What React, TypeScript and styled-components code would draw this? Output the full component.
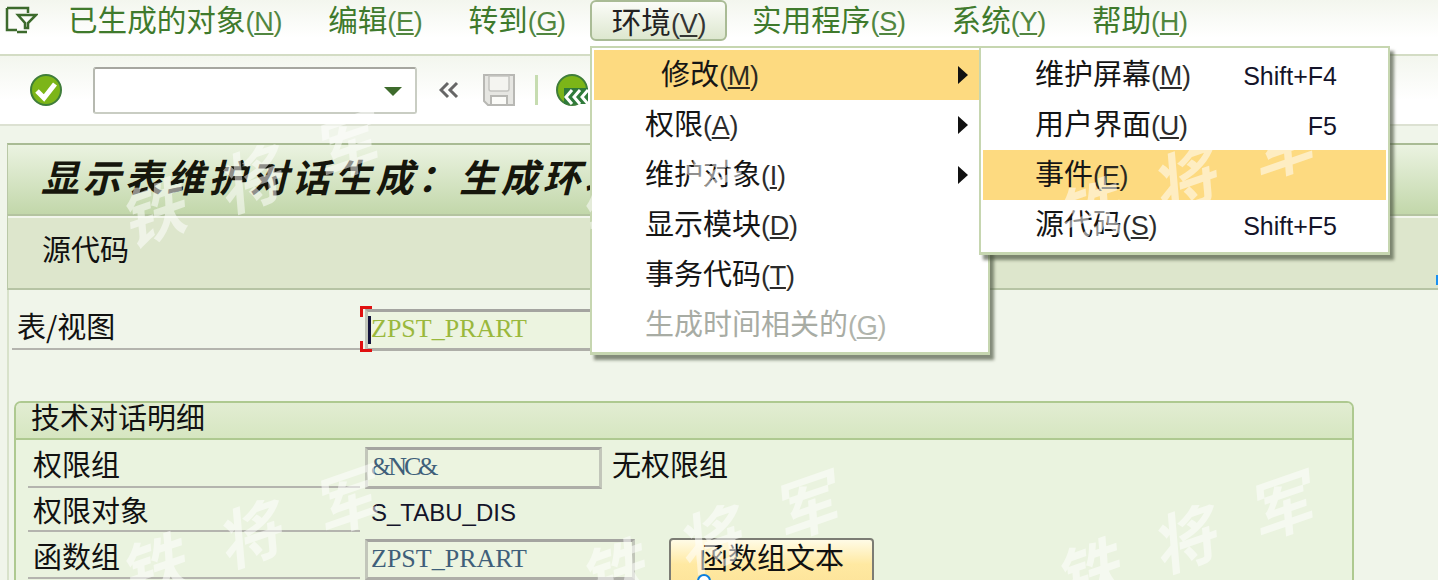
import styled, { createGlobalStyle } from 'styled-components';

const cjk = `"Noto Sans CJK SC", "Noto Sans", sans-serif`;

const GlobalStyle = createGlobalStyle`
  html, body {
    margin: 0;
    padding: 0;
    background: #f0f5ea;
    overflow: hidden;
  }
`;

const Page = styled.div`
  position: relative;
  width: 1438px;
  height: 580px;
  overflow: hidden;
  background: #f0f5ea;
  font-family: ${cjk};
  font-size: 29px;
  color: #111;
`;

const MenuBar = styled.div`
  display: flex;
  align-items: flex-start;
  height: 54px;
  padding-left: 5px;
  background: linear-gradient(#f3f6ee, #fff 70%);
  border-bottom: 2px solid #d3dcc4;
`;

const MenuTab = styled.div<{ $open?: boolean }>`
  display: flex;
  align-items: baseline;
  height: 41px;
  line-height: 38px;
  box-sizing: border-box;
  white-space: nowrap;
  padding: 0 23px;
  font-size: 29.6px;
  color: #3f7a2c;
  ${({ $open }) =>
    $open &&
    `
    margin: 0 2px 0 1px;
    padding: 0 19px 0 20px;
    color: #222;
    border: 2px solid #a9bb95;
    border-radius: 6px;
    background: linear-gradient(#fbfcf8, #dde7cf);
  `}
`;

const Key = styled.span`
  font-family: "Liberation Sans", sans-serif;
  font-size: 27px;
  letter-spacing: -0.3px;
  opacity: 0.9;
`;

const BarIcon = styled.svg`
  flex: none;
  width: 33px;
  height: 30px;
  margin: 5px 7px 0 0;
`;

const Toolbar = styled.div`
  display: flex;
  align-items: center;
  height: 68px;
  padding-left: 30px;
  background: linear-gradient(#f3f6ee, #fff 65%);
  border-bottom: 2px solid #dce1d2;
`;

const ToolIcon = styled.svg<{ $gapLeft?: number }>`
  flex: none;
  margin-left: ${({ $gapLeft }) => $gapLeft ?? 0}px;
`;

const CommandField = styled.div`
  position: relative;
  width: 324px;
  height: 47px;
  margin-left: 31px;
  box-sizing: border-box;
  background: #fff;
  border: 2px solid #c9cdc3;
  border-top-color: #a6a6a0;
  border-left-color: #b6b9b0;
  border-radius: 3px;
  &::after {
    content: '';
    position: absolute;
    right: 13px;
    top: 18px;
    border-left: 9px solid transparent;
    border-right: 9px solid transparent;
    border-top: 9px solid #3e6b2c;
  }
`;

const Separator = styled.div`
  width: 3px;
  height: 30px;
  margin-left: 20px;
  background: #c6dcb0;
`;

const Screen = styled.div`
  padding: 17px 0 0 7px;
`;

const TitleBar = styled.div`
  height: 69px;
  padding-left: 33px;
  border-top: 2px solid #a9bb94;
  border-left: 1px solid #b9c8a6;
  background: linear-gradient(#ebf3e1, #c2d7aa);
  font-size: 38px;
  font-weight: 700;
  font-style: italic;
  letter-spacing: 3.8px;
  line-height: 62px;
  white-space: nowrap;
  color: #16160c;
`;

const SubBar = styled.div`
  height: 72px;
  padding-left: 34px;
  border-top: 2px solid #b4c4a0;
  border-bottom: 2px solid #b6c4a4;
  border-left: 1px solid #b9c8a6;
  background: #dde6cc;
  box-shadow: inset 0 2px 0 #f2f6ec;
  line-height: 64px;
`;

const FormBody = styled.div`
  border-left: 2px solid #d8e2ca;
  padding-top: 16px;
`;

const Row = styled.div<{ $inset: number; $height: number }>`
  display: flex;
  align-items: flex-end;
  height: ${({ $height }) => $height}px;
  padding-left: ${({ $inset }) => $inset}px;
`;

const Label = styled.div<{ $width: number; $lift?: number }>`
  display: flex;
  align-items: flex-end;
  flex: none;
  width: ${({ $width }) => $width}px;
  height: 100%;
  box-sizing: border-box;
  padding: 0 0 ${({ $lift }) => $lift ?? 5}px 5px;
  margin-right: 5px;
  border-bottom: 2px solid #b4b4ae;
  line-height: 36px;
  white-space: nowrap;
`;

const Input = styled.div<{ $width: number; $height: number; $ink?: string; $tight?: boolean }>`
  position: relative;
  flex: none;
  width: ${({ $width }) => $width}px;
  height: ${({ $height }) => $height}px;
  margin-bottom: -1px;
  box-sizing: border-box;
  padding-left: 3px;
  border: 3px solid #c2c6ba;
  border-top-color: #a4a4a0;
  border-bottom-color: #aeaea8;
  font-family: "Liberation Serif", serif;
  font-size: 26px;
  letter-spacing: ${({ $tight }) => ($tight ? '-3px' : '0')};
  line-height: 34px;
  white-space: nowrap;
  color: ${({ $ink }) => $ink ?? '#3f5f7a'};
  background: #ecf4e0;
`;

const Corners = styled.div`
  position: absolute;
  left: -8px;
  top: -6px;
  width: 11px;
  height: 46px;
  border-left: 3px solid #e01010;
  &::before,
  &::after {
    content: '';
    position: absolute;
    left: 0;
    width: 9px;
    height: 3px;
    background: #e01010;
  }
  &::before { top: 0; }
  &::after { bottom: 0; }
  clip-path: polygon(0 0, 100% 0, 100% 11px, 0 11px, 0 35px, 100% 35px, 100% 100%, 0 100%);
`;

const Caret = styled.div`
  position: absolute;
  left: 0;
  top: 4px;
  width: 3px;
  height: 28px;
  background: #14143c;
`;

const Group = styled.div`
  width: 1340px;
  margin: 51px 0 0 5px;
  box-sizing: border-box;
  height: 200px;
  border: 2px solid #aec990;
  border-bottom: 0;
  border-radius: 7px 7px 0 0;
  background: #eaf3df;
`;

const GroupHead = styled.div`
  height: 35px;
  padding-left: 15px;
  border-bottom: 2px solid #aec990;
  background: linear-gradient(#e2edd2, #d6e6c1);
  line-height: 26px;
  border-radius: 5px 5px 0 0;
  margin-bottom: 5px;
`;

const Value = styled.div`
  margin: 0 0 0 10px;
  padding-bottom: 8px;
  align-self: center;
  line-height: 28px;
  white-space: nowrap;
`;

const PlainValue = styled.div`
  padding: 6px 0 0 6px;
  align-self: center;
  font-family: "Liberation Sans", sans-serif;
  font-size: 24px;
  color: #14142a;
`;

const Button = styled.div`
  position: relative;
  flex: none;
  width: 205px;
  height: 48px;
  margin: 0 0 -7px 34px;
  box-sizing: border-box;
  border: 2px solid #7c7c74;
  border-radius: 4px;
  background: linear-gradient(#fffbe6, #ffe9a2 55%, #fde49a);
  text-align: center;
  line-height: 32px;
  white-space: nowrap;
`;

const FocusDot = styled.div`
  position: absolute;
  left: 26px;
  top: 34px;
  width: 14px;
  height: 14px;
  box-sizing: border-box;
  border: 2px solid #0b7fe0;
  border-radius: 50%;
  background: #fff;
`;

const EdgeTick = styled.div`
  position: absolute;
  right: 0;
  top: 275px;
  width: 2px;
  height: 10px;
  background: #1a90f0;
`;

const Dropdown = styled.div<{ $left: number; $top: number; $width: number; $height: number }>`
  position: absolute;
  left: ${({ $left }) => $left}px;
  top: ${({ $top }) => $top}px;
  width: ${({ $width }) => $width}px;
  height: ${({ $height }) => $height}px;
  box-sizing: border-box;
  padding: 2px;
  background: #fff;
  border: 2px solid #c6d6b0;
  border-bottom-width: 3px;
  box-shadow: 4px 5px 3px rgba(72, 82, 62, 0.65);
`;

const DropRow = styled.div<{ $active?: boolean; $disabled?: boolean; $inset: number }>`
  display: flex;
  align-items: baseline;
  height: 50px;
  box-sizing: border-box;
  padding-left: ${({ $inset }) => $inset}px;
  line-height: 44px;
  white-space: nowrap;
  color: ${({ $disabled }) => ($disabled ? '#a8aca4' : '#151515')};
  background: ${({ $active }) => ($active ? '#fdda80' : 'transparent')};
`;

const Arrow = styled.span`
  align-self: center;
  margin-left: auto;
  margin-right: 18px;
  border-top: 9px solid transparent;
  border-bottom: 9px solid transparent;
  border-left: 10px solid #111;
`;

const Shortcut = styled.span`
  margin-left: auto;
  margin-right: 49px;
  font-family: "Liberation Sans", sans-serif;
  font-size: 25px;
  color: #14142a;
`;

const Watermarks = styled.div`
  position: absolute;
  inset: 0;
  pointer-events: none;
`;

const Mark = styled.span<{ $x: number; $y: number }>`
  position: absolute;
  left: ${({ $x }) => $x}px;
  top: ${({ $y }) => $y}px;
  font-size: 64px;
  font-weight: 700;
  font-style: italic;
  line-height: 64px;
  letter-spacing: 38px;
  white-space: nowrap;
  color: rgba(255, 255, 255, 0.52);
  transform: rotate(-19deg);
  transform-origin: 32px 32px;
`;

const tabs = [
  { text: '已生成的对象', key: 'N' },
  { text: '编辑', key: 'E' },
  { text: '转到', key: 'G' },
  { text: '环境', key: 'V', open: true },
  { text: '实用程序', key: 'S' },
  { text: '系统', key: 'Y' },
  { text: '帮助', key: 'H' },
];

const mainItems = [
  { text: '修改', key: 'M', active: true, more: true },
  { text: '权限', key: 'A', more: true },
  { text: '维护对象', key: 'I', more: true },
  { text: '显示模块', key: 'D' },
  { text: '事务代码', key: 'T' },
  { text: '生成时间相关的', key: 'G', disabled: true },
];

const subItems = [
  { text: '维护屏幕', key: 'M', shortcut: 'Shift+F4' },
  { text: '用户界面', key: 'U', shortcut: 'F5' },
  { text: '事件', key: 'E', active: true },
  { text: '源代码', key: 'S', shortcut: 'Shift+F5' },
];

const marks = [
  [118, 178],
  [578, 178],
  [1053, 178],
  [118, 533],
  [578, 538],
  [1053, 538],
];

function Mnemonic({ letter }: { letter: string }) {
  return (
    <Key>
      (<u>{letter}</u>)
    </Key>
  );
}

function OkIcon() {
  return (
    <ToolIcon width="32" height="32" viewBox="0 0 32 32">
      <circle cx="16" cy="16" r="15" fill="#7cb518" stroke="#3f7d3a" strokeWidth="2" />
      <path d="M7 17l7 7L25 10" fill="none" stroke="#fff" strokeWidth="5" />
    </ToolIcon>
  );
}

function BackChevrons() {
  return (
    <ToolIcon $gapLeft={22} width="20" height="18" viewBox="0 0 20 18">
      <path d="M9 2L2 9l7 7M18 2l-7 7 7 7" fill="none" stroke="#666" strokeWidth="3" />
    </ToolIcon>
  );
}

function SaveIcon() {
  return (
    <ToolIcon $gapLeft={24} width="32" height="32" viewBox="0 0 32 32">
      <path d="M1 1h30v30H5l-4-4z" fill="#e6e6e2" stroke="#b8b8b4" strokeWidth="2" />
      <path d="M6 2v13q0 2 2 2h16q2 0 2-2V2z" fill="#f4f4f0" stroke="#c4c4c0" strokeWidth="1.5" />
      <path d="M8 22h16v9H8z" fill="#fbfbf8" stroke="#b8b8b4" strokeWidth="2" />
    </ToolIcon>
  );
}

function EnterIcon() {
  return (
    <ToolIcon $gapLeft={18} width="32" height="32" viewBox="0 0 32 32">
      <circle cx="16" cy="16" r="15" fill="#7cb518" stroke="#3f7d3a" strokeWidth="2" />
      <path d="M8 14h24v16H8z" fill="#2f7a3a" />
      <path d="M16 16l-6 7 6 7M24 16l-6 7 6 7M32 16l-6 7 6 7" fill="none" stroke="#fff" strokeWidth="3" />
    </ToolIcon>
  );
}

export default function App() {
  return (
    <Page>
      <GlobalStyle />
      <MenuBar>
        <BarIcon viewBox="0 0 33 30">
          <path d="M2 3h21v5M2 3v22h10M22 27H12" fill="none" stroke="#3c6a2c" strokeWidth="2.5" />
          <path d="M13 10h18l-8 8v5h-3v-5z" fill="none" stroke="#3c6a2c" strokeWidth="2.5" />
        </BarIcon>
        {tabs.map((tab) => (
          <MenuTab key={tab.text} $open={tab.open}>
            {tab.text}
            <Mnemonic letter={tab.key} />
          </MenuTab>
        ))}
      </MenuBar>

      <Toolbar>
        <OkIcon />
        <CommandField />
        <BackChevrons />
        <SaveIcon />
        <Separator />
        <EnterIcon />
      </Toolbar>

      <Screen>
        <TitleBar>显示表维护对话生成：生成环境</TitleBar>
        <SubBar>源代码</SubBar>
        <FormBody>
          <Row $inset={3} $height={44}>
            <Label $width={348}>表/视图</Label>
            <Input $width={300} $height={42} $ink="#9ab83c">
              <Corners />
              <Caret />
              ZPST_PRART
            </Input>
          </Row>
          <Group>
            <GroupHead>技术对话明细</GroupHead>
            <Row $inset={12} $height={43}>
              <Label $width={332}>权限组</Label>
              <Input $width={237} $height={42} $tight>&amp;NC&amp;</Input>
              <Value>无权限组</Value>
            </Row>
            <Row $inset={12} $height={44}>
              <Label $width={332} $lift={3}>权限对象</Label>
              <PlainValue>S_TABU_DIS</PlainValue>
            </Row>
            <Row $inset={12} $height={47}>
              <Label $width={332} $lift={4}>函数组</Label>
              <Input $width={270} $height={41}>ZPST_PRART</Input>
              <Button>
                函数组文本
                <FocusDot />
              </Button>
            </Row>
          </Group>
        </FormBody>
      </Screen>

      <EdgeTick />

      <Dropdown $left={590} $top={46} $width={400} $height={309}>
        {mainItems.map((item) => (
          <DropRow
            key={item.text}
            $active={item.active}
            $disabled={item.disabled}
            $inset={item.active ? 67 : 51}
          >
            {item.text}
            <Mnemonic letter={item.key} />
            {item.more && <Arrow />}
          </DropRow>
        ))}
      </Dropdown>

      <Dropdown $left={979} $top={46} $width={411} $height={209}>
        {subItems.map((item) => (
          <DropRow key={item.text} $active={item.active} $inset={52}>
            {item.text}
            <Mnemonic letter={item.key} />
            {item.shortcut && <Shortcut>{item.shortcut}</Shortcut>}
          </DropRow>
        ))}
      </Dropdown>

      <Watermarks>
        {marks.map(([x, y]) => (
          <Mark key={`${x}-${y}`} $x={x} $y={y}>
            铁将军
          </Mark>
        ))}
      </Watermarks>
    </Page>
  );
}
